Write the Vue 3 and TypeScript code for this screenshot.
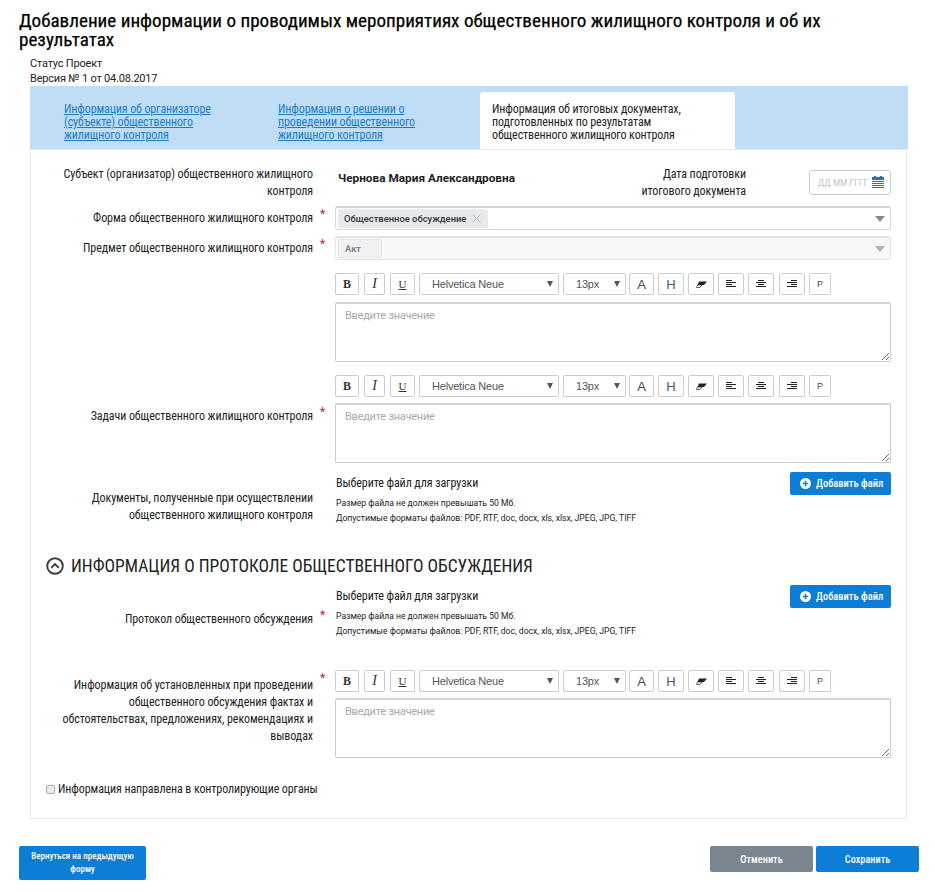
<script setup lang="ts">
    type Tab = {
        lines: string[];
        active?: boolean;
    };

    const tabs: Tab[] = [
        { lines: ["Информация об организаторе", "(субъекте) общественного", "жилищного контроля"] },
        { lines: ["Информация о решении о", "проведении общественного", "жилищного контроля"] },
        {
            lines: ["Информация об итоговых документах,", "подготовленных по результатам", "общественного жилищного контроля"],
            active: true,
        },
    ];

    const formats = "Допустимые форматы файлов: PDF, RTF, doc, docx, xls, xlsx, JPEG, JPG, TIFF";
</script>

<template>
    <div class="page">
        <h1 class="title">Добавление информации о проводимых мероприятиях общественного жилищного контроля и об их результатах</h1>
        <div class="meta">
            <div>Статус Проект</div>
            <div>Версия № 1 от 04.08.2017</div>
        </div>

        <div class="tabs">
            <div v-for="(tab, i) in tabs" :key="i" class="tab" :class="{ 'tab--active': tab.active }">
                <span v-if="tab.active">
                    <template v-for="line in tab.lines" :key="line">{{ line }}<br /></template>
                </span>
                <a v-else href="#">
                    <template v-for="line in tab.lines" :key="line">{{ line }}<br /></template>
                </a>
            </div>
        </div>

        <div class="card">
            <div class="row row--subject">
                <div class="label">Субъект (организатор) общественного жилищного<br />контроля</div>
                <div class="mark"></div>
                <div class="subject">
                    <b class="subject__name">Чернова Мария Александровна</b>
                    <div class="subject__date-label">Дата подготовки<br />итогового документа</div>
                    <div class="date">
                        <span>ДД.ММ.ГГГГ</span>
                        <svg width="12" height="13" viewBox="0 0 12 13">
                            <rect x="2" y="0" width="2" height="2" fill="#2f6dbd" />
                            <rect x="8" y="0" width="2" height="2" fill="#2f6dbd" />
                            <rect x="0" y="1" width="12" height="3" fill="#2f6dbd" />
                            <path d="M0 5.500h12M0 7.500h12M0 9.500h12M0 11.500h12" stroke="#2f6dbd" stroke-width="1.200" />
                        </svg>
                    </div>
                </div>
            </div>

            <div class="row row--select">
                <div class="label">Форма общественного жилищного контроля</div>
                <div class="mark">*</div>
                <div class="select">
                    <span class="chip">
                        Общественное обсуждение
                        <svg class="chip__x" width="9" height="9" viewBox="0 0 9 9"><path d="M.5.500l8 8M8.500.500l-8 8" stroke="#b5b5b5" /></svg>
                    </span>
                    <span class="arrow"></span>
                </div>
            </div>

            <div class="row row--select">
                <div class="label">Предмет общественного жилищного контроля</div>
                <div class="mark">*</div>
                <div class="select select--disabled">
                    <span class="chip chip--disabled">Акт</span>
                    <span class="arrow"></span>
                </div>
            </div>

            <div class="row row--editor-first">
                <div class="label"></div>
                <div class="mark"></div>
                <div class="editor">
                    <div class="toolbar">
                        <button class="btn btn--b">B</button>
                        <button class="btn btn--i">I</button>
                        <button class="btn btn--u">U</button>
                        <div class="drop drop--font">Helvetica Neue<span class="drop__arrow"></span></div>
                        <div class="drop drop--size">13px<span class="drop__arrow"></span></div>
                        <button class="btn btn--a">A</button>
                        <button class="btn btn--h">H</button>
                        <button class="btn btn--tool">
                            <svg width="11" height="7" viewBox="0 0 11 7"><path d="M3 .5h8L8 4H1.500z" fill="#222" /><path d="M1.500 4H6L4 6.500H.5z" fill="#fff" stroke="#222" stroke-width=".7" /></svg>
                        </button>
                        <button class="btn btn--tool">
                            <svg width="10" height="8" viewBox="0 0 10 8"><path d="M0 .5h6M0 2.500h10M0 4.500h6M0 6.500h10" stroke="#222" /></svg>
                        </button>
                        <button class="btn btn--tool btn--center">
                            <svg width="10" height="8" viewBox="0 0 10 8"><path d="M2 .5h6M0 2.500h10M2 4.500h6M0 6.500h10" stroke="#222" /></svg>
                        </button>
                        <button class="btn btn--tool">
                            <svg width="10" height="8" viewBox="0 0 10 8"><path d="M4 .5h6M0 2.500h10M4 4.500h6M0 6.500h10" stroke="#222" /></svg>
                        </button>
                        <button class="btn btn--p">P</button>
                    </div>
                    <textarea class="area" placeholder="Введите значение"></textarea>
                </div>
            </div>

            <div class="row row--editor">
                <div class="label label--area">Задачи общественного жилищного контроля</div>
                <div class="mark mark--area">*</div>
                <div class="editor">
                    <div class="toolbar">
                        <button class="btn btn--b">B</button>
                        <button class="btn btn--i">I</button>
                        <button class="btn btn--u">U</button>
                        <div class="drop drop--font">Helvetica Neue<span class="drop__arrow"></span></div>
                        <div class="drop drop--size">13px<span class="drop__arrow"></span></div>
                        <button class="btn btn--a">A</button>
                        <button class="btn btn--h">H</button>
                        <button class="btn btn--tool">
                            <svg width="11" height="7" viewBox="0 0 11 7"><path d="M3 .5h8L8 4H1.500z" fill="#222" /><path d="M1.500 4H6L4 6.500H.5z" fill="#fff" stroke="#222" stroke-width=".7" /></svg>
                        </button>
                        <button class="btn btn--tool">
                            <svg width="10" height="8" viewBox="0 0 10 8"><path d="M0 .5h6M0 2.500h10M0 4.500h6M0 6.500h10" stroke="#222" /></svg>
                        </button>
                        <button class="btn btn--tool btn--center">
                            <svg width="10" height="8" viewBox="0 0 10 8"><path d="M2 .5h6M0 2.500h10M2 4.500h6M0 6.500h10" stroke="#222" /></svg>
                        </button>
                        <button class="btn btn--tool">
                            <svg width="10" height="8" viewBox="0 0 10 8"><path d="M4 .5h6M0 2.500h10M4 4.500h6M0 6.500h10" stroke="#222" /></svg>
                        </button>
                        <button class="btn btn--p">P</button>
                    </div>
                    <textarea class="area area--tight" placeholder="Введите значение"></textarea>
                </div>
            </div>

            <div class="row row--files">
                <div class="label label--files">Документы, полученные при осуществлении<br />общественного жилищного контроля</div>
                <div class="mark"></div>
                <div class="files">
                    <div class="files__info">
                        <div class="files__head">Выберите файл для загрузки</div>
                        <div class="files__note">Размер файла не должен превышать 50 Мб.</div>
                        <div class="files__note">{{ formats }}</div>
                    </div>
                    <button class="add">
                        <svg width="11" height="11" viewBox="0 0 11 11"><circle cx="5.500" cy="5.500" r="5.500" fill="#fff" /><path d="M5.500 2.800v5.400M2.800 5.500h5.400" stroke="#0e7dd6" stroke-width="1.500" /></svg>
                        Добавить файл
                    </button>
                </div>
            </div>

            <h2 class="section">
                <svg width="18" height="18" viewBox="0 0 18 18"><circle cx="9" cy="9" r="7.800" fill="none" stroke="#3d3d3d" stroke-width="1.900" /><path d="M5.200 10.800 9 7l3.800 3.800" fill="none" stroke="#3d3d3d" stroke-width="1.900" /></svg>
                ИНФОРМАЦИЯ О ПРОТОКОЛЕ ОБЩЕСТВЕННОГО ОБСУЖДЕНИЯ
            </h2>

            <div class="row row--protocol">
                <div class="label label--protocol">Протокол общественного обсуждения</div>
                <div class="mark mark--protocol">*</div>
                <div class="files">
                    <div class="files__info">
                        <div class="files__head">Выберите файл для загрузки</div>
                        <div class="files__note">Размер файла не должен превышать 50 Мб.</div>
                        <div class="files__note">{{ formats }}</div>
                    </div>
                    <button class="add">
                        <svg width="11" height="11" viewBox="0 0 11 11"><circle cx="5.500" cy="5.500" r="5.500" fill="#fff" /><path d="M5.500 2.800v5.400M2.800 5.500h5.400" stroke="#0e7dd6" stroke-width="1.500" /></svg>
                        Добавить файл
                    </button>
                </div>
            </div>

            <div class="row row--editor-last">
                <div class="label label--multi">Информация об установленных при проведении<br />общественного обсуждения фактах и<br />обстоятельствах, предложениях, рекомендациях и<br />выводах</div>
                <div class="mark">*</div>
                <div class="editor">
                    <div class="toolbar">
                        <button class="btn btn--b">B</button>
                        <button class="btn btn--i">I</button>
                        <button class="btn btn--u">U</button>
                        <div class="drop drop--font">Helvetica Neue<span class="drop__arrow"></span></div>
                        <div class="drop drop--size">13px<span class="drop__arrow"></span></div>
                        <button class="btn btn--a">A</button>
                        <button class="btn btn--h">H</button>
                        <button class="btn btn--tool">
                            <svg width="11" height="7" viewBox="0 0 11 7"><path d="M3 .5h8L8 4H1.500z" fill="#222" /><path d="M1.500 4H6L4 6.500H.5z" fill="#fff" stroke="#222" stroke-width=".7" /></svg>
                        </button>
                        <button class="btn btn--tool">
                            <svg width="10" height="8" viewBox="0 0 10 8"><path d="M0 .5h6M0 2.500h10M0 4.500h6M0 6.500h10" stroke="#222" /></svg>
                        </button>
                        <button class="btn btn--tool btn--center">
                            <svg width="10" height="8" viewBox="0 0 10 8"><path d="M2 .5h6M0 2.500h10M2 4.500h6M0 6.500h10" stroke="#222" /></svg>
                        </button>
                        <button class="btn btn--tool">
                            <svg width="10" height="8" viewBox="0 0 10 8"><path d="M4 .5h6M0 2.500h10M4 4.500h6M0 6.500h10" stroke="#222" /></svg>
                        </button>
                        <button class="btn btn--p">P</button>
                    </div>
                    <textarea class="area area--tight" placeholder="Введите значение"></textarea>
                </div>
            </div>

            <label class="check">
                <input type="checkbox" />
                Информация направлена в контролирующие органы
            </label>
        </div>

        <div class="footer">
            <button class="action action--back">Вернуться на предыдущую<br />форму</button>
            <div class="footer__right">
                <button class="action action--cancel">Отменить</button>
                <button class="action action--save">Сохранить</button>
            </div>
        </div>
    </div>
</template>

<style>
    html,
    body {
        margin: 0;
        background: #fff;
    }
</style>

<style scoped>
    .page {
        box-sizing: border-box;
        width: 935px;
        height: 894px;
        padding: 11px 28px 0 19px;
        font-family: "Roboto Condensed", Roboto, sans-serif;
        font-size: 12px;
        letter-spacing: -0.08px;
        color: #222;
        overflow: hidden;
    }

    .title {
        margin: 0;
        font-size: 19.100px;
        line-height: 19px;
        font-weight: 400;
        letter-spacing: 0;
        color: #000;
        -webkit-text-stroke: 0.25px #000;
    }

    .meta {
        margin: 7px 0 0 11px;
        font-family: Roboto, sans-serif;
        font-size: 11px;
        line-height: 15px;
        letter-spacing: -0.2px;
    }

    .tabs {
        display: flex;
        height: 63px;
        margin: 0 -1px 0 11px;
        background: #c0ddf6;
    }

    .tab {
        box-sizing: border-box;
        padding-top: 17px;
        line-height: 13px;
        letter-spacing: -0.12px;
    }

    .tab:nth-child(1) {
        width: 214px;
        padding-left: 34px;
    }

    .tab:nth-child(2) {
        width: 236px;
        padding-left: 34px;
    }

    .tab a {
        color: #1c7cc4;
    }

    .tab--active {
        width: 255px;
        margin-top: 6px;
        padding: 11px 0 0 12px;
        background: #fff;
        border-radius: 3px 3px 0 0;
    }

    .card {
        box-sizing: border-box;
        height: 670px;
        margin-left: 11px;
        padding: 16px 15px 0 0;
        border: 1px solid #e4eaf0;
    }

    .row {
        display: grid;
        grid-template-columns: 282px 22px minmax(0, 1fr);
    }

    .row--subject {
        height: 34px;
    }

    .row--select {
        height: 24px;
        margin-top: 6px;
    }

    .row--editor-first,
    .row--editor {
        margin-top: 13px;
    }

    .row--files {
        height: 54px;
        margin-top: 9px;
    }

    .row--protocol {
        height: 56px;
    }

    .row--editor-last {
        margin-top: 29px;
    }

    .label {
        text-align: right;
        line-height: 17px;
        white-space: nowrap;
    }

    .row--select .label {
        line-height: 24px;
    }

    .label--area {
        padding-top: 33px;
    }

    .label--files {
        padding-top: 18px;
    }

    .label--protocol {
        padding-top: 26px;
    }

    .label--multi {
        padding-top: 7px;
    }

    .mark {
        padding-left: 7px;
        color: #c2185b;
        font-family: Roboto, sans-serif;
        line-height: 17px;
    }

    .mark--area {
        padding-top: 29px;
    }

    .mark--protocol {
        padding-top: 22px;
    }

    .subject {
        display: flex;
        align-items: flex-start;
    }

    .subject__name {
        flex: none;
        box-sizing: border-box;
        width: 300px;
        padding: 5px 0 0 3px;
        font-family: Roboto, sans-serif;
        font-size: 11.800px;
        line-height: 14px;
        letter-spacing: 0;
    }

    .subject__date-label {
        flex: none;
        width: 111px;
        text-align: right;
        line-height: 17px;
    }

    .date {
        display: flex;
        flex: none;
        box-sizing: border-box;
        align-items: center;
        gap: 4px;
        width: 82px;
        height: 25px;
        margin: 4px 0 0 63px;
        padding-left: 8px;
        border: 1px solid #ccc;
        border-radius: 3px;
        font-size: 9.500px;
        color: #c4c4c4;
    }

    .select {
        position: relative;
        display: flex;
        box-sizing: border-box;
        align-items: center;
        height: 24px;
        padding-left: 2px;
        border: 1px solid #d8d8d8;
        border-top: 2px solid #d4d4d4;
        border-radius: 3px;
        background: #fff;
    }

    .select--disabled {
        border-color: #e4e4e4;
        background: #f7f8fa;
    }

    .chip {
        display: flex;
        box-sizing: border-box;
        align-items: center;
        height: 19px;
        padding: 0 7px 0 6px;
        border-radius: 2px;
        background: #e6eaef;
        font-family: Roboto, sans-serif;
        font-size: 9.400px;
        font-weight: 500;
        letter-spacing: 0;
        color: #333;
    }

    .chip--disabled {
        width: 44px;
        border: 1px solid #e4e4e4;
        background: #f1f2f4;
        color: #777;
    }

    .chip__x {
        margin-left: 6px;
    }

    .arrow {
        position: absolute;
        top: 8px;
        right: 5px;
        border-top: 6px solid #888;
        border-left: 5px solid transparent;
        border-right: 5px solid transparent;
    }

    .select--disabled .arrow {
        border-top-color: #b4b4b4;
    }

    .toolbar {
        display: flex;
        height: 22px;
    }

    .btn,
    .drop {
        display: flex;
        box-sizing: border-box;
        flex: none;
        align-items: center;
        justify-content: center;
        height: 22px;
        margin-right: 4px;
        padding: 0;
        border: 1px solid #ccc;
        border-radius: 2px;
        background: #fff;
        color: #333;
        font-family: "Liberation Sans", sans-serif;
        letter-spacing: 0;
    }

    .btn--b {
        width: 24px;
        margin-right: 5px;
        font: 700 12px "Liberation Serif", serif;
    }

    .btn--i {
        width: 21px;
        margin-right: 5px;
        font: italic 400 14px "Liberation Serif", serif;
    }

    .btn--u {
        width: 25px;
        font: 400 11px "Liberation Serif", serif;
        text-decoration: underline;
    }

    .drop {
        position: relative;
        justify-content: flex-start;
        font-size: 11px;
        letter-spacing: -0.2px;
        color: #555;
    }

    .drop--font {
        width: 140px;
        padding-left: 12px;
    }

    .drop--size {
        width: 63px;
        margin-right: 3px;
        padding-left: 12px;
    }

    .drop__arrow {
        position: absolute;
        top: 7px;
        right: 5px;
        border-top: 6px solid #555;
        border-left: 3.500px solid transparent;
        border-right: 3.500px solid transparent;
    }

    .btn--a {
        width: 25px;
        font-size: 13px;
        color: #444;
    }

    .btn--h {
        width: 26px;
        font-size: 13px;
        color: #445a78;
    }

    .btn--tool {
        width: 26px;
    }

    .btn--center {
        margin-right: 5px;
    }

    .btn--p {
        width: 22px;
        font-size: 9px;
        color: #4a3f73;
    }

    .area {
        display: block;
        box-sizing: border-box;
        width: 556px;
        height: 60px;
        margin-top: 7px;
        padding: 5px 9px;
        border: 1px solid #ccc;
        border-top: 2px solid #d4d4d4;
        border-radius: 2px;
        background: #fff;
        font-family: Roboto, sans-serif;
        font-size: 11px;
        letter-spacing: -0.25px;
        outline: none;
    }

    .area--tight {
        margin-top: 6px;
    }

    .area::placeholder {
        color: #aaa;
    }

    .files {
        display: flex;
        justify-content: space-between;
    }

    .files__info {
        padding-left: 1px;
    }

    .files__head {
        margin-top: 4px;
        line-height: 14px;
    }

    .files__note {
        font-family: Roboto, sans-serif;
        font-size: 8.600px;
        line-height: 15px;
        letter-spacing: 0;
    }

    .files__head + .files__note {
        margin-top: 6px;
    }

    .add {
        display: flex;
        box-sizing: border-box;
        align-items: center;
        gap: 5px;
        width: 101px;
        height: 23px;
        padding: 0 0 0 10px;
        border: none;
        border-radius: 2px;
        background: #0e7dd6;
        color: #fff;
        font-family: "Roboto Condensed", Roboto, sans-serif;
        font-size: 10.500px;
        font-weight: 500;
        white-space: nowrap;
    }

    .section {
        display: flex;
        align-items: center;
        gap: 7px;
        height: 24px;
        margin: 28px 0 7px 15px;
        font-size: 17.500px;
        line-height: 24px;
        font-weight: 400;
        letter-spacing: 0;
    }

    .check {
        display: flex;
        align-items: center;
        gap: 3px;
        margin: 23px 0 0 15px;
        line-height: 16px;
        letter-spacing: -0.1px;
    }

    .check input {
        box-sizing: border-box;
        width: 9px;
        height: 9px;
        margin: 0;
        border: 1px solid #aaa;
        border-radius: 2px;
        background: #ececec;
        appearance: none;
    }

    .footer {
        display: flex;
        justify-content: space-between;
        align-items: flex-start;
        margin: 27px -12px 0 0;
    }

    .footer__right {
        display: flex;
        gap: 3px;
    }

    .action {
        box-sizing: border-box;
        width: 103px;
        height: 26px;
        padding: 0;
        border: none;
        border-radius: 2px;
        background: #0e7dd6;
        color: #fff;
        font-family: "Roboto Condensed", Roboto, sans-serif;
        font-size: 10.300px;
        font-weight: 500;
    }

    .action--back {
        width: 127px;
        height: 34px;
        font-size: 9px;
        line-height: 13px;
    }

    .action--cancel {
        background: #7a868f;
    }
</style>
